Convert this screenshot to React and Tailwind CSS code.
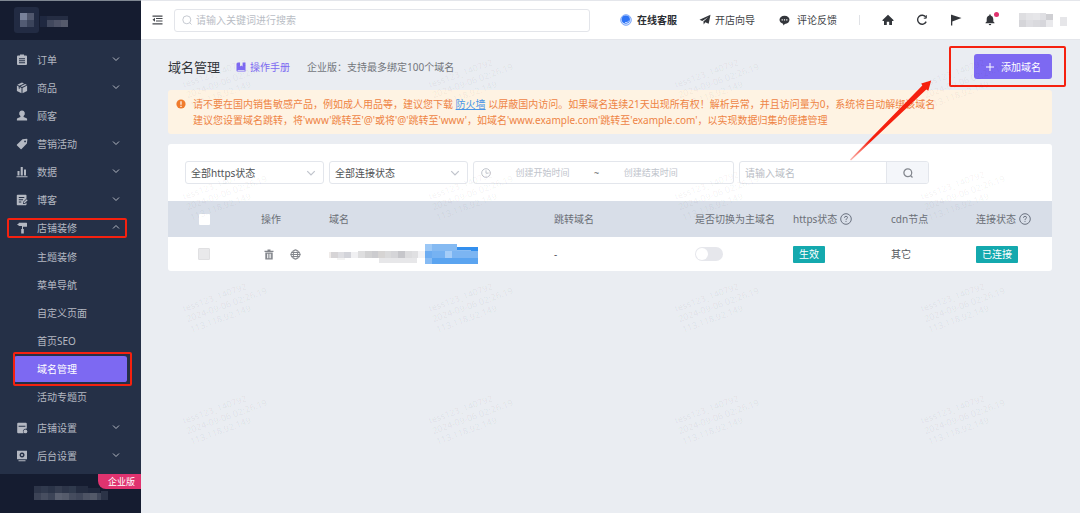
import React from "react";

const MENU = [
  { label: "订单", icon: "order", arrow: true },
  { label: "商品", icon: "goods", arrow: true },
  { label: "顾客", icon: "user" },
  { label: "营销活动", icon: "tag", arrow: true },
  { label: "数据", icon: "data", arrow: true },
  { label: "博客", icon: "blog", arrow: true },
];
const SUB = ["主题装修", "菜单导航", "自定义页面", "首页SEO", "域名管理", "活动专题页"];

function MenuIcon({ name }) {
  const common = { viewBox: "0 0 12 12", className: "h-3 w-3 shrink-0", fill: "currentColor", "aria-hidden": true };
  switch (name) {
    case "order":
      return (
        <svg {...common}>
          <path fillRule="evenodd" d="M4 0.5h4v1h2a1 1 0 0 1 1 1V10a1 1 0 0 1-1 1H2a1 1 0 0 1-1-1V2.500a1 1 0 0 1 1-1h2zM3 4.200v1h6v-1zM3 6.200v1h6v-1zM3 8.200v1h6v-1z" />
        </svg>
      );
    case "goods":
      return (
        <svg {...common}>
          <path d="M6 0.500l2 .9-4.600 2.300-2-1zM9.100 1.900l1.600.8L6 5 4.500 4.200zM.9 3.600l1.800.9v2l1 .5V5l1.800.9v5.400L.9 9zM6.500 5.900L11.100 3.600V9l-4.600 2.300z" />
        </svg>
      );
    case "user":
      return (
        <svg {...common}>
          <path d="M6 .5a2.800 3 0 0 1 1.600 5.500v.9l3 1.300q.5.300.5.900V10.500H.9V9.100q0-.6.5-.9l3-1.300V6A2.800 3 0 0 1 6 .5z" />
        </svg>
      );
    case "tag":
      return (
        <svg {...common}>
          <path fillRule="evenodd" d="M6.500 1.200L11 .8q.4 0 .4.400L10.900 5.600 5.600 10.900q-.5.500-1 0L1 7.400q-.5-.5 0-1zM9 2.400a.9.900 0 1 0 .1 0z" />
        </svg>
      );
    case "data":
      return (
        <svg {...common}>
          <path d="M1.500 5h2v4.500h-2zM4.700 1h2.100v8.500H4.700zM8 3.500h2v6H8zM.5 10.200h11v1H.5z" />
        </svg>
      );
    case "blog":
      return (
        <svg {...common}>
          <path fillRule="evenodd" d="M1.500.8h8.300q.7 0 .7.700v3L7 8v1.900h2l1.500-1.500v2.100q0 .7-.7.700H1.500q-.7 0-.7-.7v-9q0-.7.700-.7zM2.800 3v.9h5.500V3zM2.800 5.300v.9H7v-.9zM2.800 7.600v.9h2.500v-.9z" />
          <path d="M10.700 5.200l1 1-3.100 3.100H7.600v-1z" />
        </svg>
      );
    case "paint":
      return (
        <svg {...common}>
          <path d="M3 .8h7.500q.5 0 .5.500v3q0 .5-.5.500H7V7h.8v4.500H5.200V7H6V4H3q-.5 0-.5-.5V3H1.400V1.900h1.100V1.300q0-.5.500-.5z" />
        </svg>
      );
    case "shop":
      return (
        <svg {...common}>
          <path fillRule="evenodd" d="M2.200.8h7.600q1 0 1 1v4.600L8.200 7 6.800 9l.8 2.200H2.200q-1 0-1-1V1.800q0-1 1-1zM2.600 3.800v1h6.800v-1z" />
          <circle cx="9.400" cy="9.400" r="1.900" />
        </svg>
      );
    default:
      return (
        <svg {...common}>
          <path fillRule="evenodd" d="M1 .8h10v8.400H1zM6 2.500a2.500 2.500 0 1 0 .1 0zM2.500 10.200h7v1h-7z" />
          <circle cx="6" cy="5" r="1.100" />
        </svg>
      );
  }
}

function Chevron({ up, className }) {
  return (
    <svg viewBox="0 0 8 6" className={className} fill="none" stroke="currentColor" aria-hidden="true">
      <path d={up ? "M1 4.500L4 1.500 7 4.500" : "M1 1.500L4 4.500 7 1.500"} />
    </svg>
  );
}

function NavItem({ label, icon, arrow, up }) {
  return (
    <a href="#" className="relative flex h-7 items-center pl-4 pr-[21px]" aria-expanded={arrow ? Boolean(up) : undefined}>
      <MenuIcon name={icon} />
      <span className="ml-[9px] grow">{label}</span>
      {arrow && <Chevron up={up} className="mb-0.5 h-1.5 w-2" />}
      {up && <span className="pointer-events-none absolute inset-y-1 left-[7px] right-[14px] rounded-[2px] border-2 border-[#f5210f]" />}
    </a>
  );
}

function Mosaic({ blocks, w, h, className }) {
  return (
    <svg viewBox={`0 0 ${w} ${h}`} className={className} aria-hidden="true" shapeRendering="crispEdges">
      {blocks.map(([x, y, bw, bh, fill], i) => (
        <rect key={i} x={x} y={y} width={bw} height={bh} fill={fill} />
      ))}
    </svg>
  );
}

const LOGO = [
  [20, 12, 7, 7, "#78819a"], [27, 12, 7, 7, "#50576d"], [20, 19, 7, 7, "#525b73"], [27, 19, 7, 7, "#3b445b"],
  [40, 15, 7, 11, "#1f2840"], [47, 15, 21, 4, "#252d43"], [47, 19, 7, 7, "#41485d"], [54, 19, 7, 7, "#4d5266"], [61, 19, 7, 7, "#565b6c"],
];
const ACCOUNT = [
  [0, 0, 7, 7, "#2d3549"], [7, 0, 7, 7, "#313a4e"], [14, 0, 7, 7, "#2b3448"], [21, 0, 7, 7, "#353d50"], [28, 0, 7, 7, "#2d3549"], [35, 0, 7, 7, "#303a4d"], [42, 0, 12, 7, "#242c40"], [54, 2, 12, 5, "#20283d"],
  [0, 7, 7, 7, "#3c4356"], [7, 7, 7, 7, "#474e60"], [14, 7, 7, 7, "#3c4457"], [21, 7, 7, 7, "#5a6070"], [28, 7, 7, 7, "#555b6b"], [35, 7, 7, 7, "#454c5e"], [42, 7, 7, 7, "#3f4659"], [49, 7, 7, 7, "#4d5364"], [56, 7, 7, 7, "#535969"], [63, 7, 4, 7, "#3f4659"], [67, 5, 7, 9, "#2b3347"],
];
const USER = [
  [0, 0, 7, 7, "#dedee1"], [7, 0, 7, 7, "#e4e4e7"], [14, 0, 7, 7, "#e6e6e9"], [21, 0, 6, 7, "#dfdfe3"], [27, 1, 7, 6, "#cfcfd3"],
  [0, 7, 7, 7, "#d5d5d9"], [7, 7, 7, 7, "#dedee2"], [14, 7, 7, 7, "#dadade"], [21, 7, 6, 7, "#d6d6db"], [27, 7, 7, 7, "#e9e9ec"],
  [41, 4, 7, 9, "#e6e6e9"],
];
const DOMAIN = [
  [0, 8, 2, 6, "#efebe9"], [2, 8, 7, 6, "#d6d4d6"], [9, 8, 6, 6, "#dedee2"], [15, 8, 7, 6, "#d3d4da"], [22, 8, 7, 6, "#f0f0f2"], [29, 7, 7, 7, "#dededf"], [36, 7, 7, 7, "#d2d2d3"], [43, 7, 6, 7, "#cccccf"], [49, 7, 7, 7, "#d6d4d3"], [56, 7, 6, 7, "#dadadb"], [62, 7, 7, 7, "#d5d5d8"], [69, 7, 7, 7, "#c6c6ca"], [76, 7, 7, 7, "#dcdcde"], [83, 7, 6, 7, "#e0e0e2"], [89, 7, 7, 7, "#f3f3f5"],
  [8, 14, 8, 2, "#f3f3f3"], [50, 14, 38, 5, "#e7e7e9"],
  [96, 0, 7, 7, "#9cc8f6"], [103, 0, 25, 7, "#85baf2"], [128, 3, 21, 10, "#338fee"], [128, 6, 14, 7, "#8bbdf3"], [96, 7, 7, 7, "#6cacf1"], [103, 7, 13, 7, "#76b2f2"], [116, 7, 7, 7, "#a5cdf8"], [123, 7, 26, 7, "#7cb5f2"], [96, 14, 7, 6, "#86bbf4"], [103, 14, 46, 6, "#5ba4f0"],
];

function Help() {
  return (
    <svg viewBox="0 0 12 12" className="h-3 w-3" fill="none" stroke="#6b7280" aria-hidden="true">
      <circle cx="6" cy="6" r="5.300" />
      <path d="M4.500 4.800q0-1.500 1.500-1.500t1.500 1.300q0 .8-.8 1.200T6 7M6 7.900v1" />
    </svg>
  );
}

function Watermark() {
  return (
    <div className="pointer-events-none absolute inset-0 overflow-hidden pl-[43px] pt-[52px] text-[9px] leading-[11px] text-black/[0.06]" aria-hidden="true">
      <div className="grid auto-rows-[112px] grid-cols-[repeat(4,246px)]">
        {Array.from({ length: 16 }, (_, i) => (
          <div key={i}>
            <div className="mt-3 w-fit -rotate-20 whitespace-nowrap">
              tess123_140792<br />2024-09-06 02:26:19<br />113.118.92.149
            </div>
          </div>
        ))}
      </div>
    </div>
  );
}

function Select({ label }) {
  return (
    <div className="relative w-[139px]">
      <select aria-label={label} className="h-[23px] w-full appearance-none rounded-[3px] border border-[#e3e6ec] bg-white pl-[5px] text-[#505255]">
        <option>{label}</option>
      </select>
      <Chevron className="pointer-events-none absolute right-2 top-2 h-2 w-2.5 text-[#c0c4cc]" />
    </div>
  );
}

function Header() {
  return (
    <header className="flex h-10 items-center border-b border-t border-[#e4e6eb] bg-white pl-[11px] pr-[13px] text-[#404246]">
      <button type="button" aria-label="折叠菜单">
        <svg viewBox="0 0 11 10" className="h-2.5 w-[11px]" fill="#44474c">
          <path d="M.5.500h10v1.300H.5zM4 3h6.500v1.100H4zM4 5.500h6.500v1.100H4zM.5 8.200h10v1.300H.5zM3 2.800v4L.5 4.800z" />
        </svg>
      </button>
      <label className="ml-[11px] flex h-[23px] w-[416px] items-center gap-1 rounded-[3px] border border-[#e3e5ea] pl-[7px]">
        <svg viewBox="0 0 10 10" className="h-2.5 w-2.5" fill="none" stroke="#c0c4cc" strokeWidth="0.900">
          <circle cx="4.800" cy="4.800" r="4" />
          <path d="M7.700 7.700L9.500 9.500" />
        </svg>
        <input aria-label="搜索" placeholder="请输入关键词进行搜索" className="min-w-0 grow outline-none placeholder:text-[#b9bdc5]" />
      </label>
      <a href="#" className="ml-[30px] flex items-center gap-[5px] font-bold text-[#2b2e33]">
        <svg viewBox="0 0 12 12" className="h-3 w-3">
          <circle cx="6" cy="6" r="5.300" fill="#d7e6ff" stroke="#6f9df6" strokeWidth="0.900" />
          <circle cx="5.800" cy="5.600" r="4.100" fill="#2e74f6" />
          <path d="M5 8.600q2.800.6 4-2" fill="none" stroke="#cfe0ff" strokeWidth="0.900" />
        </svg>
        在线客服
      </a>
      <a href="#" className="ml-[22px] flex items-center gap-1">
        <svg viewBox="0 0 12 12" className="h-3 w-3" fill="#33363b">
          <path d="M11.500.8L9.700 9.800 6.300 8.300 4.700 10.600 4.400 7.600 9.300 3 3.300 7 .5 5.800z" />
        </svg>
        开店向导
      </a>
      <a href="#" className="ml-6 flex items-center gap-[7px]">
        <svg viewBox="0 0 11 11" className="h-[11px] w-[11px]">
          <path fill="#33363b" d="M5.500.7c3 0 5 1.800 5 4.100S8.500 8.900 5.800 8.900L4.500 10.600 4 8.700C1.900 8.200.5 6.700.5 4.800.5 2.500 2.500.7 5.500.7z" />
          <path fill="#fff" d="M2.600 4.300h1.200v1.200H2.600zM4.900 4.300h1.200v1.200H4.900zM7.200 4.300h1.200v1.200H7.200z" />
        </svg>
        评论反馈
      </a>
      <span className="ml-[22px] h-2.5 w-px bg-[#e0e2e6]" />
      <div className="ml-[22px] flex items-center gap-[22px]">
        <button type="button" aria-label="首页">
          <svg viewBox="0 0 12 12" className="h-3 w-3" fill="#33363b">
            <path d="M6 .7L11.700 6.200l-.5.700H10V11H7.200V7.800H4.800V11H2V6.900H.8l-.5-.7z" />
          </svg>
        </button>
        <button type="button" aria-label="刷新">
          <svg viewBox="0 0 12 12" className="h-3 w-3" fill="none" stroke="#33363b" strokeWidth="1.400">
            <path d="M9.900 3.300A4.500 4.500 0 1 0 10.200 7.600" />
            <path d="M10.300 1.200v3H7.800" strokeWidth="1" />
          </svg>
        </button>
        <button type="button" aria-label="旗帜">
          <svg viewBox="0 0 12 12" className="h-3 w-3" fill="#33363b">
            <path d="M1 .8h1.300V11.500H1zM2.300 1L11.500 4 2.300 7.500z" />
          </svg>
        </button>
        <button type="button" aria-label="通知" className="relative">
          <svg viewBox="0 0 12 12" className="h-3 w-3" fill="#33363b">
            <path d="M5.300.6h1.400v.8q2.600.6 2.600 3.500v2.600l1.200 1.200v.6h-9v-.6l1.200-1.200V4.900q0-2.900 2.600-3.500zM4.700 10h2.600q-.2 1.200-1.300 1.200T4.700 10z" />
          </svg>
          <span className="absolute -right-[3px] -top-0.5 h-[5px] w-[5px] rounded-full bg-[#e0336f]" />
        </button>
      </div>
      <Mosaic blocks={USER} w={48} h={14} className="ml-auto h-3.5 w-12" />
    </header>
  );
}

export default function App() {
  return (
    <div className="relative flex min-h-screen bg-[#eaedf2] font-['Noto_Sans','Noto_Sans_CJK_SC',sans-serif] text-[10px] leading-4">
      <aside className="flex w-[141px] shrink-0 flex-col bg-[#253047] text-[#b4b8c2]">
        <div className="h-10 border-t border-[#7f8792] bg-[#151c30]">
          <svg viewBox="0 0 80 39" className="h-[39px] w-20" aria-hidden="true">
            <rect x="14" y="6" width="25" height="26" rx="3" fill="#222b43" />
            <g shapeRendering="crispEdges">
              {LOGO.map(([x, y, w, h, fill], i) => <rect key={i} x={x} y={y} width={w} height={h} fill={fill} />)}
            </g>
          </svg>
        </div>
        <nav className="grow pt-1.5">
          {MENU.map((m) => <NavItem key={m.label} {...m} />)}
          <NavItem label="店铺装修" icon="paint" arrow up />
          <div className="pb-[3px] pt-px">
            {SUB.map((s) =>
              s === "域名管理" ? (
                <div key={s} className="relative h-7 px-3.5">
                  <a href="#" aria-current="page" className="flex h-full items-center rounded-[3px] border-y border-[#253047] bg-[#7d69f2] pl-[23px] text-white">{s}</a>
                  <span className="pointer-events-none absolute -inset-y-[3px] left-[13px] right-[9px] rounded-[2px] border-2 border-[#f5210f]" />
                </div>
              ) : (
                <a key={s} href="#" className="flex h-7 items-center pl-[37px]">{s}</a>
              )
            )}
          </div>
          <NavItem label="店铺设置" icon="shop" arrow />
          <NavItem label="后台设置" icon="system" arrow />
        </nav>
        <div className="relative h-[39px] bg-[#151c30] pl-[34px] pt-3">
          <Mosaic blocks={ACCOUNT} w={74} h={14} className="h-3.5 w-[74px]" />
          <span className="absolute right-0 top-0 rounded-bl-lg bg-[#e0336f] pl-2.5 pr-1.5 text-[9px] leading-[15px] text-white">企业版</span>
        </div>
      </aside>

      <div className="relative flex min-w-0 grow flex-col">
        <Header />
        <main className="pl-[27px] pr-7 pt-[14px]">
          <div className="flex h-[25px] items-center">
            <h1 className="text-[13px] text-[#33363b]">域名管理</h1>
            <a href="#" className="ml-4 flex items-center gap-1 text-[#7d69f2]">
              <svg viewBox="0 0 10 10" className="h-2.5 w-2.5" fill="#7d69f2">
                <path fillRule="evenodd" d="M.5 2Q.5.500 2 .5h2v4l1.300-1 1.300 1v-4h2.900v9H1.500q-1 0-1-1zM1.600 8v.7h7V8z" />
              </svg>
              操作手册
            </a>
            <p className="ml-[17px] text-[#73767c]">企业版：支持最多绑定100个域名</p>
            <div className="relative ml-auto">
              <button type="button" className="flex h-[25px] items-center gap-1.5 rounded-[3px] bg-[#7d69f2] px-[11px] text-white">
                <svg viewBox="0 0 10 10" className="h-2.5 w-2.5" stroke="currentColor"><path d="M5 1v8M1 5h8" /></svg>
                添加域名
              </button>
              <span className="pointer-events-none absolute -inset-y-2 -left-[25px] -right-3.5 rounded-[2px] border-2 border-[#f5210f]" />
              <svg viewBox="0 0 82 82" className="pointer-events-none absolute -left-[124px] top-[26px] z-10 h-[82px] w-[82px]" aria-hidden="true">
                <defs>
                  <linearGradient id="fade" x1="0" y1="1" x2="1" y2="0">
                    <stop offset="0" stopColor="#f5210f" stopOpacity="0.300" />
                    <stop offset="0.250" stopColor="#f5210f" />
                  </linearGradient>
                </defs>
                <path fill="url(#fade)" d="M0 79.500L72.300 5.500 71.300 3.600 81.200.5 78.300 10.800 76.300 9.600 1 80.500z" />
              </svg>
            </div>
          </div>

          <section className="mt-[11px] flex gap-[7px] rounded-[3px] bg-[#fef3e3] px-2 py-[6px] text-[#ee8445]">
            <svg viewBox="0 0 10 10" className="mt-[3px] h-2.5 w-2.5 shrink-0">
              <circle cx="5" cy="5" r="4.600" fill="#f07b2c" />
              <path d="M5 2.200v3.600M5 6.800v1.200" stroke="#fff" strokeWidth="1.200" />
            </svg>
            <p>
              请不要在国内销售敏感产品，例如成人用品等，建议您下载 <a href="#" className="text-[#4b96e6] underline">防火墙</a> 以屏蔽国内访问。如果域名连续21天出现所有权！解析异常，并且访问量为0，系统将自动解绑该域名
              <br />
              建议您设置域名跳转，将'www'跳转至'@'或将'@'跳转至'www'，如域名'www.example.com'跳转至'example.com'，以实现数据归集的便捷管理
            </p>
          </section>

          <section className="mt-2.5 rounded-[3px] bg-white">
            <form className="flex gap-[5px] p-[17px]" onSubmit={(e) => e.preventDefault()}>
              <Select label="全部https状态" />
              <Select label="全部连接状态" />
              <div className="flex h-[23px] w-[261px] items-center rounded-[3px] border border-[#e3e6ec] pl-[7px] text-[9px]">
                <svg viewBox="0 0 10 10" className="h-2.5 w-2.5 shrink-0" fill="none" stroke="#b8bcc5" strokeWidth="0.900">
                  <circle cx="5" cy="5" r="4.300" />
                  <path d="M5 2.300V5.200H7.500" />
                </svg>
                <input aria-label="创建开始时间" placeholder="创建开始时间" className="w-[103px] text-center placeholder:text-[#c0c4cc]" />
                <span className="text-[#606266]">~</span>
                <input aria-label="创建结束时间" placeholder="创建结束时间" className="w-[103px] text-center placeholder:text-[#c0c4cc]" />
              </div>
              <div className="flex h-[23px] w-[190px] overflow-hidden rounded-[3px] border border-[#e3e6ec]">
                <input aria-label="域名" placeholder="请输入域名" className="min-w-0 grow pl-[5px] placeholder:text-[#b9bdc5]" />
                <button type="submit" aria-label="搜索" className="flex w-11 items-center justify-center border-l border-[#e3e6ec] bg-[#f4f6fa]">
                  <svg viewBox="0 0 10 10" className="h-2.5 w-2.5" fill="none" stroke="#84888f" strokeWidth="1.300">
                    <circle cx="4.800" cy="4.800" r="3.900" />
                    <path d="M7.500 7.500L9.500 9.500" />
                  </svg>
                </button>
              </div>
            </form>
            <table className="w-full table-fixed text-left">
              <colgroup>
                <col className="w-[93px]" />
                <col className="w-[68px]" />
                <col />
                <col className="w-[141px]" />
                <col className="w-[98px]" />
                <col className="w-[98px]" />
                <col className="w-[85px]" />
                <col className="w-[76px]" />
              </colgroup>
              <thead className="bg-[#d8dee8] text-[#6b6f77]">
                <tr className="h-9 *:font-normal">
                  <th className="pl-[31px]"><input type="checkbox" aria-label="全选" className="block h-[11px] w-[11px] appearance-none rounded-[1px] bg-white" /></th>
                  <th>操作</th>
                  <th>域名</th>
                  <th>跳转域名</th>
                  <th>是否切换为主域名</th>
                  <th><span className="flex items-center gap-[3px]">https状态 <Help /></span></th>
                  <th>cdn节点</th>
                  <th><span className="flex items-center gap-[3px]">连接状态 <Help /></span></th>
                </tr>
              </thead>
              <tbody className="text-[#55585d]">
                <tr className="h-[34px]">
                  <td className="pl-[30px]"><input type="checkbox" disabled aria-label="选择域名" className="block h-3 w-3 appearance-none rounded-[1px] border border-[#e0e0e2] bg-[#e9e9eb]" /></td>
                  <td>
                    <div className="flex gap-4 pl-[3px]">
                      <button type="button" aria-label="删除">
                        <svg viewBox="0 0 10 11" className="h-[11px] w-2.5" fill="#83868c">
                          <path fillRule="evenodd" d="M3.500.5h3v1.200h3v1.200h-9V1.700h3zM1.300 3.500h7.400v7H1.300zM3 4.700v4.600h.8V4.700zM4.700 4.700v4.600h.8V4.700zM6.300 4.700v4.600h.8V4.700z" />
                        </svg>
                      </button>
                      <button type="button" aria-label="访问">
                        <svg viewBox="0 0 11 11" className="h-[11px] w-[11px]" fill="none" stroke="#83868c">
                          <circle cx="5.500" cy="5.500" r="4.500" />
                          <ellipse cx="5.500" cy="5.500" rx="2.200" ry="4.500" />
                          <path d="M1.500 3.500h8M.5 5.500h10M1.500 7.500h8" />
                        </svg>
                      </button>
                    </div>
                  </td>
                  <td><Mosaic blocks={DOMAIN} w={151} h={20} className="h-5 w-[151px]" /></td>
                  <td>-</td>
                  <td>
                    <button type="button" role="switch" aria-checked="false" aria-label="切换为主域名" className="flex h-3.5 w-7 items-center rounded-full bg-[#e6e7ec] px-px">
                      <span className="h-3 w-3 rounded-full bg-white" />
                    </button>
                  </td>
                  <td><span className="inline-block rounded-[1px] bg-[#14a9ae] px-1.5 leading-[17px] text-white">生效</span></td>
                  <td>其它</td>
                  <td><span className="inline-block rounded-[1px] bg-[#14a9ae] px-1.5 leading-[17px] text-white">已连接</span></td>
                </tr>
              </tbody>
            </table>
          </section>
        </main>
        <Watermark />
      </div>
    </div>
  );
}
